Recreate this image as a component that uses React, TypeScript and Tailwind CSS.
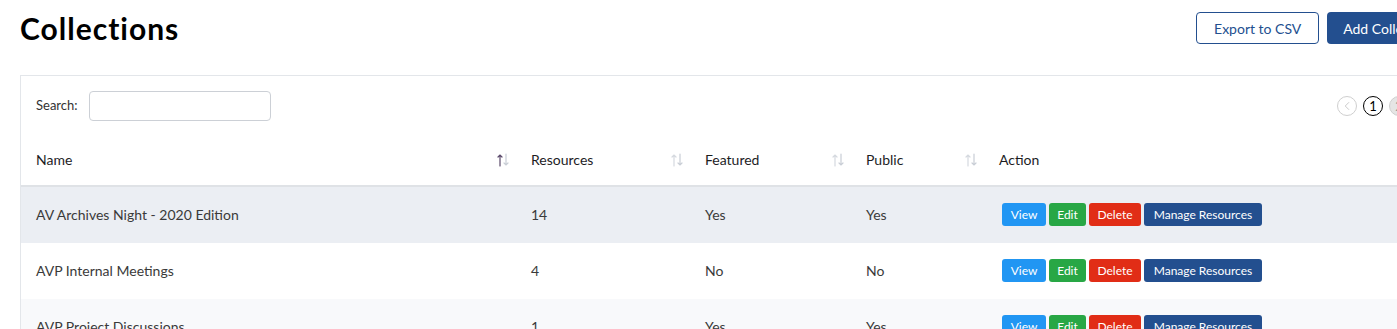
import { ChevronLeft } from "lucide-react";

type Row = { name: string; resources: number; featured: string; isPublic: string; bg: string };

const rows: Row[] = [
  { name: "AV Archives Night - 2020 Edition", resources: 14, featured: "Yes", isPublic: "Yes", bg: "bg-[#ebeef3]" },
  { name: "AVP Internal Meetings", resources: 4, featured: "No", isPublic: "No", bg: "bg-white" },
  { name: "AVP Project Discussions", resources: 1, featured: "Yes", isPublic: "Yes", bg: "bg-[#f8f9fb]" },
];

function SortIcon({ active }: { active?: boolean }) {
  return (
    <svg width="14" height="14" viewBox="0 0 14 14" fill="none" strokeWidth={1.2} strokeLinecap="round">
      <g stroke={active ? "#5b4a6b" : "#d5d9df"}>
        <path d="M4 13V2M2 4l2-2 2 2" />
      </g>
      <g stroke="#c9ced6">
        <path d="M10 1v11M8 10l2 2 2-2" />
      </g>
    </svg>
  );
}

function HeaderCell({ label, width, active }: { label: string; width: string; active?: boolean }) {
  return (
    <div className={`${width} flex items-center justify-between pl-[15px] pr-[6px]`}>
      <span>{label}</span>
      <SortIcon active={active} />
    </div>
  );
}

export default function App() {
  return (
    <div className="w-[1397px] h-[329px] overflow-hidden bg-white" style={{ fontFamily: "Lato, 'Noto Sans', sans-serif" }}>
      <div className="w-[1470px] px-5">
        {/* page header */}
        <div className="flex items-center justify-between pt-3 h-[44px]">
          <h1 className="text-[30px] font-bold text-black tracking-[1px] leading-none">Collections</h1>
          <div className="flex gap-2">
            <button className="h-8 w-[123px] rounded-[4px] border border-[#234f8f] text-[14px] text-[#234f8f] bg-white">
              Export to CSV
            </button>
            <button className="h-8 px-4 rounded-[4px] bg-[#234f8f] text-[14px] text-white">
              Add Collection
            </button>
          </div>
        </div>

        {/* card */}
        <div className="mt-[31px] border border-[#e3e6ea] border-b-0">
          <div className="flex items-center justify-between pl-[15px] pr-[14px] pt-[15px]">
            <div className="flex items-center gap-[11px] text-[13px] text-[#333]">
              <span>Search:</span>
              <input className="h-[30px] w-[182px] rounded-[4px] border border-[#ccd0d6] outline-none" />
            </div>
            <div className="flex items-center gap-[6px]">
              <span className="w-[20px] h-[20px] rounded-full border border-[#cfcfcf] flex items-center justify-center text-[#c4c4c4]">
                <ChevronLeft size={14} strokeWidth={1.5} />
              </span>
              <span className="w-[20px] h-[20px] rounded-full border border-black flex items-center justify-center text-[13px] text-black leading-none">1</span>
              <span className="w-[20px] h-[20px] rounded-full border border-[#cfcfcf] bg-[#e5e5e5] flex items-center justify-center text-[13px] text-[#999] leading-none">2</span>
              <span className="w-[20px] h-[20px] rounded-full border border-[#cfcfcf] flex items-center justify-center text-[#c4c4c4] rotate-180">
                <ChevronLeft size={14} strokeWidth={1.5} />
              </span>
            </div>
          </div>

          {/* table header */}
          <div className="mt-[14px] flex h-[52px] items-center pb-[1px] border-b-2 border-[#dfe2e6] text-[14px] text-[#1d1d1f]">
            <HeaderCell label="Name" width="w-[495px]" active />
            <HeaderCell label="Resources" width="w-[174px]" />
            <HeaderCell label="Featured" width="w-[161px]" />
            <HeaderCell label="Public" width="w-[133px]" />
            <div className="pl-[15px]">Action</div>
          </div>

          {rows.map((r) => (
            <div key={r.name} className={`flex h-[56px] items-center pb-[1px] text-[14px] text-[#3a3a3a] ${r.bg}`}>
              <div className="w-[495px] pl-[15px]">{r.name}</div>
              <div className="w-[174px] pl-[15px]">{r.resources}</div>
              <div className="w-[161px] pl-[15px]">{r.featured}</div>
              <div className="w-[133px] pl-[15px]">{r.isPublic}</div>
              <div className="flex gap-[3px] pl-[18px] text-[12px] text-white">
                <button className="h-[23px] w-[44px] rounded-[3px] bg-[#2196f3]">View</button>
                <button className="h-[23px] w-[37px] rounded-[3px] bg-[#28a745]">Edit</button>
                <button className="h-[23px] w-[52px] rounded-[3px] bg-[#e12d16]">Delete</button>
                <button className="h-[23px] w-[118px] rounded-[3px] bg-[#234f8f]">Manage Resources</button>
              </div>
            </div>
          ))}
        </div>
      </div>
    </div>
  );
}
